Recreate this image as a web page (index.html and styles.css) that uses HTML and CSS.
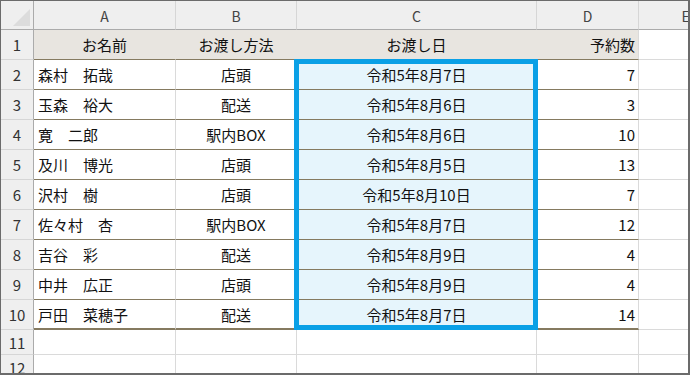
FILE: index.html
```html
<!DOCTYPE html>
<html lang="ja">
<head>
<meta charset="utf-8">
<link rel="stylesheet" href="styles.css">
</head>
<body>
<div class="frame">
  <div class="sheet">
    <div class="corner"><span class="tri"></span></div>
    <div class="colh">A</div><div class="colh">B</div><div class="colh">C</div><div class="colh">D</div><div class="colh">E</div>

    <div class="rowh r1">1</div>
    <div class="cell hdr c">お名前</div><div class="cell hdr c">お渡し方法</div><div class="cell hdr c">お渡し日</div><div class="cell hdr hdr-end r">予約数</div><div class="cell e r1"></div>

    <div class="rowh">2</div>
    <div class="cell d l">森村　拓哉</div><div class="cell d c">店頭</div><div class="cell d c sel">令和5年8月7日</div><div class="cell d r">7</div><div class="cell e"></div>

    <div class="rowh">3</div>
    <div class="cell d l">玉森　裕大</div><div class="cell d c">配送</div><div class="cell d c sel">令和5年8月6日</div><div class="cell d r">3</div><div class="cell e"></div>

    <div class="rowh">4</div>
    <div class="cell d l">寛　二郎</div><div class="cell d c">駅内BOX</div><div class="cell d c sel">令和5年8月6日</div><div class="cell d r">10</div><div class="cell e"></div>

    <div class="rowh">5</div>
    <div class="cell d l">及川　博光</div><div class="cell d c">店頭</div><div class="cell d c sel">令和5年8月5日</div><div class="cell d r">13</div><div class="cell e"></div>

    <div class="rowh">6</div>
    <div class="cell d l">沢村　樹</div><div class="cell d c">店頭</div><div class="cell d c sel">令和5年8月10日</div><div class="cell d r">7</div><div class="cell e"></div>

    <div class="rowh">7</div>
    <div class="cell d l">佐々村　杏</div><div class="cell d c">駅内BOX</div><div class="cell d c sel">令和5年8月7日</div><div class="cell d r">12</div><div class="cell e"></div>

    <div class="rowh">8</div>
    <div class="cell d l">吉谷　彩</div><div class="cell d c">配送</div><div class="cell d c sel">令和5年8月9日</div><div class="cell d r">4</div><div class="cell e"></div>

    <div class="rowh">9</div>
    <div class="cell d l">中井　広正</div><div class="cell d c">店頭</div><div class="cell d c sel">令和5年8月9日</div><div class="cell d r">4</div><div class="cell e"></div>

    <div class="rowh">10</div>
    <div class="cell d last l">戸田　菜穂子</div><div class="cell d last c">配送</div><div class="cell d last c sel">令和5年8月7日</div><div class="cell d last r">14</div><div class="cell e"></div>

    <div class="rowh">11</div>
    <div class="cell"></div><div class="cell"></div><div class="cell"></div><div class="cell"></div><div class="cell e"></div>

    <div class="rowh">12</div>
    <div class="cell"></div><div class="cell"></div><div class="cell"></div><div class="cell"></div><div class="cell e"></div>

    <div class="selection"></div>
  </div>
</div>
</body>
</html>
```

FILE: styles.css
```css
html, body {
  margin: 0;
  padding: 0;
  background: #ffffff;
}

.frame {
  width: 690px;
  height: 375px;
  box-sizing: border-box;
  border: 1px solid #6b6b6b;
  border-right-width: 2px;
  border-bottom-width: 2px;
  overflow: hidden;
  font-family: "Noto Sans CJK JP", "Noto Sans", sans-serif;
  font-size: 15px;
  color: #111;
}

.sheet {
  position: relative;
  display: grid;
  grid-template-columns: 33px 142px 121px 240px 102px 94px;
  grid-template-rows: 29px 30px repeat(9, 30px) 25px 25px;
  width: 732px;
}

.corner {
  position: relative;
  background: #efefef;
  border-right: 1px solid #ababab;
  border-bottom: 1px solid #ababab;
}

.tri {
  position: absolute;
  right: 3px;
  bottom: 3px;
  width: 0;
  height: 0;
  border-left: 17px solid transparent;
  border-bottom: 17px solid #dcdcdc;
}

.colh {
  background: #efefef;
  border-right: 1px solid #d6d6d6;
  border-bottom: 1px solid #ababab;
  display: flex;
  align-items: center;
  justify-content: center;
  font-size: 14px;
  color: #444;
  padding-top: 1px;
}

.rowh {
  background: #efefef;
  border-right: 1px solid #ababab;
  border-bottom: 1px solid #d6d6d6;
  display: flex;
  align-items: center;
  justify-content: center;
  font-size: 15px;
  color: #333;
}

.cell {
  border-right: 1px solid #dadada;
  border-bottom: 1px solid #dadada;
  display: flex;
  align-items: center;
  white-space: nowrap;
  overflow: hidden;
}

.l { justify-content: flex-start; padding-left: 4px; }
.c { justify-content: center; }
.r { justify-content: flex-end; padding-right: 3px; }

.hdr {
  background: #e8e5e0;
  border-right-color: #e8e5e0;
  border-bottom: 1px solid #857a60;
}

.hdr-end {
  border-right-color: #dadada;
}

.d {
  border-bottom: 1px solid #857a60;
}

.d.last {
  border-bottom: 2px solid #857a60;
}

.sel {
  background: #e6f5fc;
}

.selection {
  position: absolute;
  left: 293px;
  top: 58px;
  width: 244px;
  height: 271px;
  box-sizing: border-box;
  border: 5px solid #0aa0e6;
  pointer-events: none;
}
```
